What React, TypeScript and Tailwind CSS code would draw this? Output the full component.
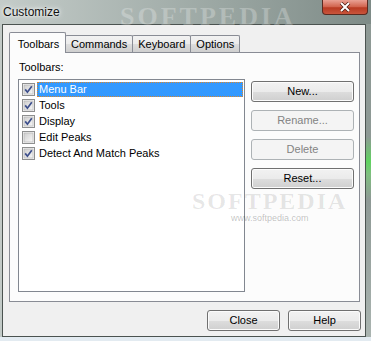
import React from "react";

const toolbars = [
  { name: "Menu Bar", checked: true, selected: true },
  { name: "Tools", checked: true },
  { name: "Display", checked: true },
  { name: "Edit Peaks", checked: false },
  { name: "Detect And Match Peaks", checked: true },
];

const tabs = ["Toolbars", "Commands", "Keyboard", "Options"];

function CheckBox({ checked }: { checked: boolean }) {
  return (
    <svg width="13" height="13" viewBox="0 0 13 13" className="shrink-0">
      <defs>
        <linearGradient id="cbfill" x1="0" y1="0" x2="1" y2="1">
          <stop offset="0" stopColor="#cfcfcf" />
          <stop offset="1" stopColor="#f7f7f7" />
        </linearGradient>
      </defs>
      <rect x="0.5" y="0.5" width="12" height="12" fill="#f4f4f4" stroke="#8e8f8f" />
      <rect x="2" y="2" width="9" height="9" fill="url(#cbfill)" stroke="#b0b0b0" strokeWidth="0.6" />
      {checked && (
        <path d="M3.2 6.4 L5.4 9.2 L9.8 3.2" fill="none" stroke="#3d4f8c" strokeWidth="1.7" />
      )}
    </svg>
  );
}

function WinButton({ label, disabled, className = "" }: { label: string; disabled?: boolean; className?: string }) {
  if (disabled) {
    return (
      <div className={`h-[21px] flex items-center justify-center rounded-[3px] border border-[#adb2b5] bg-[#f4f4f4] text-[#838383] ${className}`}>
        {label}
      </div>
    );
  }
  return (
    <div
      className={`h-[21px] flex items-center justify-center rounded-[3px] border border-[#707070] shadow-[inset_0_0_0_1px_#fbfbfb] bg-[linear-gradient(to_bottom,#f2f2f2_0%,#ebebeb_50%,#dddddd_51%,#cfcfcf_100%)] text-black ${className}`}
    >
      {label}
    </div>
  );
}

export default function App() {
  return (
    <div
      className="relative w-[371px] h-[341px] overflow-hidden bg-[linear-gradient(to_right,#c4ccc9_0%,#9aa6a2_60%,#7e8b87_100%)] text-[11px] text-black"
      style={{ fontFamily: '"Liberation Sans", Arial, sans-serif' }}
    >
      {/* title bar */}
      <div className="relative h-[24px] flex items-center pl-[3px]">
        <span className="text-[12px] text-[#111] [text-shadow:0_0_6px_#ffffff,0_0_3px_#ffffff]">Customize</span>
        <span
          className="absolute left-[120px] top-[-3px] text-[26px] font-bold tracking-[3px] text-white/25"
          style={{ fontFamily: '"Liberation Serif", serif' }}
        >
          SOFTPEDIA
        </span>
        <div className="absolute right-[3px] top-0 w-[46px] h-[15px] rounded-b-[4px] border border-t-0 border-[#5a2a20] bg-[linear-gradient(to_bottom,#e9a194_0%,#d1624c_50%,#b83a22_55%,#c9553c_100%)] flex items-center justify-center">
          <svg width="12" height="10" viewBox="0 0 12 10">
            <path d="M2 1 L10 9 M10 1 L2 9" stroke="#4a1a10" strokeWidth="3.4" />
            <path d="M2 1 L10 9 M10 1 L2 9" stroke="#ffffff" strokeWidth="2" />
          </svg>
        </div>
      </div>

      {/* side frames + client */}
      <div className="flex">
        <div className="w-[2px] bg-[#c2cac7]" />
        <div className="w-[364px] h-[313px] border border-[#4b5350] bg-[#f0f0f0] pl-[6px] pr-[5px] pt-[7px] flex flex-col">
          {/* tabs */}
          <div className="flex items-end h-[20px] relative z-10">
            {tabs.map((t, i) =>
              i === 0 ? (
                <div
                  key={t}
                  className="h-[21px] -mb-px w-[57px] flex items-start justify-center pt-[3px] pl-[2px] border border-b-0 border-[#898c95] bg-[#fcfcfc] rounded-t-[2px]"
                >
                  {t}
                </div>
              ) : (
                <div
                  key={t}
                  className="h-[17px] -ml-px flex items-center px-[5px] border border-b-0 border-[#898c95] bg-[linear-gradient(to_bottom,#f2f2f2_0%,#ebebeb_50%,#dddddd_51%,#cfcfcf_100%)] rounded-t-[2px]"
                >
                  {t}
                </div>
              )
            )}
          </div>

          {/* tab panel */}
          <div className="h-[250px] border border-[#898c95] bg-[#fcfcfc] pl-[8px] pt-[8px] flex flex-col">
            <div className="h-[13px] leading-[13px] ml-px mb-[5px]">Toolbars:</div>
            <div className="flex">
              <div className="w-[227px] h-[213px] border border-[#828790] bg-white pt-px pl-[3px] pr-px">
                {toolbars.map((tb) => (
                  <div key={tb.name} className="h-[16px] flex items-center gap-[2px]">
                    <CheckBox checked={tb.checked} />
                    {tb.selected ? (
                      <div className="flex-1 h-[15px] flex items-center pl-px bg-[#3399ff] text-white border border-dotted border-[#d9872e]">
                        {tb.name}
                      </div>
                    ) : (
                      <div className="flex-1 h-[15px] flex items-center pl-[2px]">{tb.name}</div>
                    )}
                  </div>
                ))}
              </div>
              <div className="ml-[6px] mt-[2px] w-[103px] flex flex-col gap-[8px]">
                <WinButton label="New..." />
                <WinButton label="Rename..." disabled />
                <WinButton label="Delete" disabled />
                <WinButton label="Reset..." />
              </div>
            </div>
          </div>

          {/* bottom buttons */}
          <div className="flex justify-end gap-[8px] mt-[8px] mr-[-1px]">
            <WinButton label="Close" className="w-[73px]" />
            <WinButton label="Help" className="w-[73px]" />
          </div>
        </div>
        <div className="flex-1 bg-[linear-gradient(to_bottom,#8e9995_0%,#8e9995_36%,#5fd35f_44%,#7fbf7f_48%,#8e9995_56%,#aab4b0_100%)]" />
      </div>
      <div className="h-[4px] bg-[#e3ebf1]" />

      {/* watermark */}
      <div className="pointer-events-none absolute left-[192px] top-[189px] flex flex-col items-center">
        <span
          className="text-[24px] leading-[24px] font-bold tracking-[2px] text-black/10"
          style={{ fontFamily: '"Liberation Serif", serif' }}
        >
          SOFTPEDIA
        </span>
        <span className="text-[9px] leading-[11px] text-black/25">www.softpedia.com</span>
      </div>
    </div>
  );
}
